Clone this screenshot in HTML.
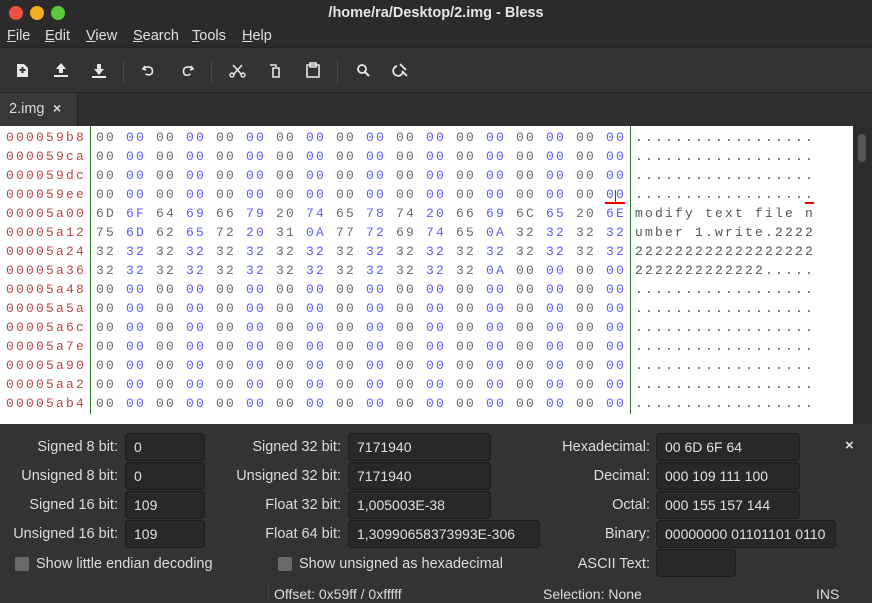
<!DOCTYPE html>
<html><head><style>
*{margin:0;padding:0;box-sizing:border-box}
body{width:872px;height:603px;background:#333333;font-family:"Liberation Sans",sans-serif;color:#dcdcdc;position:relative;overflow:hidden;font-size:14px}
.a{position:absolute}
#title{left:0;top:0;width:872px;height:26px;background:#2b2b2b;text-align:center;font-weight:bold;font-size:14.5px;line-height:26px;color:#e6e6e6}
.dot{position:absolute;top:6px;width:14px;height:14px;border-radius:50%}
#menu{top:26px;left:0;width:872px;height:21px;background:#2b2b2b}
#menu span{position:absolute;top:2px;font-size:14.5px;color:#e0e0e0}
#tb{top:47px;left:0;width:872px;height:46px;background:#333;border-top:1px solid #252525;border-bottom:1px solid #252525}
.sep{position:absolute;top:12px;width:1px;height:24px;background:#4a4a4a}
#tabs{top:93px;left:0;width:872px;height:33px;background:#2f2f2f}
#tab{position:absolute;left:0;top:0;width:78px;height:33px;background:#383838;border-right:1px solid #222}
#hex{top:126px;left:0;width:853px;height:298px;background:#fff}
#sb{top:126px;left:853px;width:19px;height:298px;background:#2d2d2d}
.row{position:absolute;left:0;height:19px;font-family:"Liberation Mono",monospace;font-size:13px;letter-spacing:2.2px;white-space:pre;line-height:19px}
.row .o{position:absolute;left:6px;color:#b5474a}
.row b{font-weight:normal;position:absolute;}
.g{color:#6a6a6a}.bl{color:#5c5cff}
.row .t{position:absolute;left:635px;color:#555}
.lbl{position:absolute;text-align:right;font-size:14.5px;color:#dcdcdc}
.in{position:absolute;height:28px;background:#282828;border:1px solid #1c1c1c;border-radius:4px;font-size:14px;padding-left:8px;line-height:26px;color:#e0e0e0}
.cb{position:absolute;width:14px;height:14px;background:#6a6a6a;border-radius:2px;top:557px}
</style></head><body>
<div class="a" id="title">/home/ra/Desktop/2.img - Bless
<div class="dot" style="left:9px;background:#ec5145"></div>
<div class="dot" style="left:30px;background:#f1ad23"></div>
<div class="dot" style="left:51px;background:#5cc93d"></div>
</div>
<div class="a" id="menu">
<span style="left:7px"><u>F</u>ile</span><span style="left:45px"><u>E</u>dit</span><span style="left:86px"><u>V</u>iew</span><span style="left:133px"><u>S</u>earch</span><span style="left:192px"><u>T</u>ools</span><span style="left:242px"><u>H</u>elp</span>
</div>
<div class="a" id="tb">
<svg width="872" height="44" style="position:absolute;left:0;top:0" fill="none" stroke="#e8e8e8" stroke-width="2">
<path d="M17 16h7l4 4v9H17z" fill="#e8e8e8" stroke="none"/><path d="M22.5 19v6M19.5 22h6" stroke="#333"/>
<path d="M61 15l-5 6h3v4h4v-4h3z" fill="#e8e8e8" stroke="none"/><path d="M54 28h14"/>
<path d="M99 27l-5-6h3v-5h4v5h3z" fill="#e8e8e8" stroke="none"/><path d="M92 29h14"/>
<path d="M145 18l-2 3 3 1M143.5 21c2-3 9-3 9 2s-5 4-7 3" stroke-width="1.6"/>
<path d="M191 18l2 3-3 1M192.5 21c-2-3-9-3-9 2s4 5 7 3" stroke-width="1.6"/>
<path d="M233 17l9 10M242 17l-9 10" stroke-width="1.6"/><circle cx="232" cy="27" r="2" stroke-width="1.4"/><circle cx="243" cy="27" r="2" stroke-width="1.4"/>
<path d="M270 17h6v2M273 20h6v9h-6z" stroke-width="1.6"/>
<path d="M307 17h12v12h-12z M310 15h6v4h-6z" stroke-width="1.6"/>
<circle cx="362" cy="21" r="4" stroke-width="1.8"/><path d="M365 24l4 4"/>
<path d="M397 18a5 5 0 1 0 6 6M402 23l5 5M400 16l6 6" stroke-width="1.8"/>
</svg>
<div class="sep" style="left:123px"></div><div class="sep" style="left:211px"></div><div class="sep" style="left:337px"></div>
</div>
<div class="a" id="tabs"><div id="tab"><span style="position:absolute;left:9px;top:8px;font-size:14.5px">2.img</span><span style="position:absolute;left:53px;top:7px;font-size:14px;font-weight:bold">×</span></div></div>
<div class="a" id="hex">
<div class="a" style="left:90px;top:0;width:1px;height:288px;background:#2a7a2a"></div>
<div class="a" style="left:630px;top:0;width:1px;height:288px;background:#2a7a2a"></div>
<div class="a" style="left:605px;top:76px;width:20px;height:2px;background:#e00"></div>
<div class="a" style="left:615px;top:64px;width:1px;height:13px;background:#e00"></div>
<div class="a" style="left:805px;top:76px;width:9px;height:2px;background:#e00"></div>
</div>
<div class="a" id="sb"><div class="a" style="left:5px;top:8px;width:8px;height:28px;background:#555;border-radius:4px"></div></div>

<div class="row" style="top:128px"><span class="o">000059b8</span><b class="g" style="left:96px">00</b><b class="bl" style="left:126px">00</b><b class="g" style="left:156px">00</b><b class="bl" style="left:186px">00</b><b class="g" style="left:216px">00</b><b class="bl" style="left:246px">00</b><b class="g" style="left:276px">00</b><b class="bl" style="left:306px">00</b><b class="g" style="left:336px">00</b><b class="bl" style="left:366px">00</b><b class="g" style="left:396px">00</b><b class="bl" style="left:426px">00</b><b class="g" style="left:456px">00</b><b class="bl" style="left:486px">00</b><b class="g" style="left:516px">00</b><b class="bl" style="left:546px">00</b><b class="g" style="left:576px">00</b><b class="bl" style="left:606px">00</b><span class="t">..................</span></div>
<div class="row" style="top:147px"><span class="o">000059ca</span><b class="g" style="left:96px">00</b><b class="bl" style="left:126px">00</b><b class="g" style="left:156px">00</b><b class="bl" style="left:186px">00</b><b class="g" style="left:216px">00</b><b class="bl" style="left:246px">00</b><b class="g" style="left:276px">00</b><b class="bl" style="left:306px">00</b><b class="g" style="left:336px">00</b><b class="bl" style="left:366px">00</b><b class="g" style="left:396px">00</b><b class="bl" style="left:426px">00</b><b class="g" style="left:456px">00</b><b class="bl" style="left:486px">00</b><b class="g" style="left:516px">00</b><b class="bl" style="left:546px">00</b><b class="g" style="left:576px">00</b><b class="bl" style="left:606px">00</b><span class="t">..................</span></div>
<div class="row" style="top:166px"><span class="o">000059dc</span><b class="g" style="left:96px">00</b><b class="bl" style="left:126px">00</b><b class="g" style="left:156px">00</b><b class="bl" style="left:186px">00</b><b class="g" style="left:216px">00</b><b class="bl" style="left:246px">00</b><b class="g" style="left:276px">00</b><b class="bl" style="left:306px">00</b><b class="g" style="left:336px">00</b><b class="bl" style="left:366px">00</b><b class="g" style="left:396px">00</b><b class="bl" style="left:426px">00</b><b class="g" style="left:456px">00</b><b class="bl" style="left:486px">00</b><b class="g" style="left:516px">00</b><b class="bl" style="left:546px">00</b><b class="g" style="left:576px">00</b><b class="bl" style="left:606px">00</b><span class="t">..................</span></div>
<div class="row" style="top:185px"><span class="o">000059ee</span><b class="g" style="left:96px">00</b><b class="bl" style="left:126px">00</b><b class="g" style="left:156px">00</b><b class="bl" style="left:186px">00</b><b class="g" style="left:216px">00</b><b class="bl" style="left:246px">00</b><b class="g" style="left:276px">00</b><b class="bl" style="left:306px">00</b><b class="g" style="left:336px">00</b><b class="bl" style="left:366px">00</b><b class="g" style="left:396px">00</b><b class="bl" style="left:426px">00</b><b class="g" style="left:456px">00</b><b class="bl" style="left:486px">00</b><b class="g" style="left:516px">00</b><b class="bl" style="left:546px">00</b><b class="g" style="left:576px">00</b><b class="bl" style="left:606px">00</b><span class="t">..................</span></div>
<div class="row" style="top:204px"><span class="o">00005a00</span><b class="g" style="left:96px">6D</b><b class="bl" style="left:126px">6F</b><b class="g" style="left:156px">64</b><b class="bl" style="left:186px">69</b><b class="g" style="left:216px">66</b><b class="bl" style="left:246px">79</b><b class="g" style="left:276px">20</b><b class="bl" style="left:306px">74</b><b class="g" style="left:336px">65</b><b class="bl" style="left:366px">78</b><b class="g" style="left:396px">74</b><b class="bl" style="left:426px">20</b><b class="g" style="left:456px">66</b><b class="bl" style="left:486px">69</b><b class="g" style="left:516px">6C</b><b class="bl" style="left:546px">65</b><b class="g" style="left:576px">20</b><b class="bl" style="left:606px">6E</b><span class="t">modify text file n</span></div>
<div class="row" style="top:223px"><span class="o">00005a12</span><b class="g" style="left:96px">75</b><b class="bl" style="left:126px">6D</b><b class="g" style="left:156px">62</b><b class="bl" style="left:186px">65</b><b class="g" style="left:216px">72</b><b class="bl" style="left:246px">20</b><b class="g" style="left:276px">31</b><b class="bl" style="left:306px">0A</b><b class="g" style="left:336px">77</b><b class="bl" style="left:366px">72</b><b class="g" style="left:396px">69</b><b class="bl" style="left:426px">74</b><b class="g" style="left:456px">65</b><b class="bl" style="left:486px">0A</b><b class="g" style="left:516px">32</b><b class="bl" style="left:546px">32</b><b class="g" style="left:576px">32</b><b class="bl" style="left:606px">32</b><span class="t">umber 1.write.2222</span></div>
<div class="row" style="top:242px"><span class="o">00005a24</span><b class="g" style="left:96px">32</b><b class="bl" style="left:126px">32</b><b class="g" style="left:156px">32</b><b class="bl" style="left:186px">32</b><b class="g" style="left:216px">32</b><b class="bl" style="left:246px">32</b><b class="g" style="left:276px">32</b><b class="bl" style="left:306px">32</b><b class="g" style="left:336px">32</b><b class="bl" style="left:366px">32</b><b class="g" style="left:396px">32</b><b class="bl" style="left:426px">32</b><b class="g" style="left:456px">32</b><b class="bl" style="left:486px">32</b><b class="g" style="left:516px">32</b><b class="bl" style="left:546px">32</b><b class="g" style="left:576px">32</b><b class="bl" style="left:606px">32</b><span class="t">222222222222222222</span></div>
<div class="row" style="top:261px"><span class="o">00005a36</span><b class="g" style="left:96px">32</b><b class="bl" style="left:126px">32</b><b class="g" style="left:156px">32</b><b class="bl" style="left:186px">32</b><b class="g" style="left:216px">32</b><b class="bl" style="left:246px">32</b><b class="g" style="left:276px">32</b><b class="bl" style="left:306px">32</b><b class="g" style="left:336px">32</b><b class="bl" style="left:366px">32</b><b class="g" style="left:396px">32</b><b class="bl" style="left:426px">32</b><b class="g" style="left:456px">32</b><b class="bl" style="left:486px">0A</b><b class="g" style="left:516px">00</b><b class="bl" style="left:546px">00</b><b class="g" style="left:576px">00</b><b class="bl" style="left:606px">00</b><span class="t">2222222222222.....</span></div>
<div class="row" style="top:280px"><span class="o">00005a48</span><b class="g" style="left:96px">00</b><b class="bl" style="left:126px">00</b><b class="g" style="left:156px">00</b><b class="bl" style="left:186px">00</b><b class="g" style="left:216px">00</b><b class="bl" style="left:246px">00</b><b class="g" style="left:276px">00</b><b class="bl" style="left:306px">00</b><b class="g" style="left:336px">00</b><b class="bl" style="left:366px">00</b><b class="g" style="left:396px">00</b><b class="bl" style="left:426px">00</b><b class="g" style="left:456px">00</b><b class="bl" style="left:486px">00</b><b class="g" style="left:516px">00</b><b class="bl" style="left:546px">00</b><b class="g" style="left:576px">00</b><b class="bl" style="left:606px">00</b><span class="t">..................</span></div>
<div class="row" style="top:299px"><span class="o">00005a5a</span><b class="g" style="left:96px">00</b><b class="bl" style="left:126px">00</b><b class="g" style="left:156px">00</b><b class="bl" style="left:186px">00</b><b class="g" style="left:216px">00</b><b class="bl" style="left:246px">00</b><b class="g" style="left:276px">00</b><b class="bl" style="left:306px">00</b><b class="g" style="left:336px">00</b><b class="bl" style="left:366px">00</b><b class="g" style="left:396px">00</b><b class="bl" style="left:426px">00</b><b class="g" style="left:456px">00</b><b class="bl" style="left:486px">00</b><b class="g" style="left:516px">00</b><b class="bl" style="left:546px">00</b><b class="g" style="left:576px">00</b><b class="bl" style="left:606px">00</b><span class="t">..................</span></div>
<div class="row" style="top:318px"><span class="o">00005a6c</span><b class="g" style="left:96px">00</b><b class="bl" style="left:126px">00</b><b class="g" style="left:156px">00</b><b class="bl" style="left:186px">00</b><b class="g" style="left:216px">00</b><b class="bl" style="left:246px">00</b><b class="g" style="left:276px">00</b><b class="bl" style="left:306px">00</b><b class="g" style="left:336px">00</b><b class="bl" style="left:366px">00</b><b class="g" style="left:396px">00</b><b class="bl" style="left:426px">00</b><b class="g" style="left:456px">00</b><b class="bl" style="left:486px">00</b><b class="g" style="left:516px">00</b><b class="bl" style="left:546px">00</b><b class="g" style="left:576px">00</b><b class="bl" style="left:606px">00</b><span class="t">..................</span></div>
<div class="row" style="top:337px"><span class="o">00005a7e</span><b class="g" style="left:96px">00</b><b class="bl" style="left:126px">00</b><b class="g" style="left:156px">00</b><b class="bl" style="left:186px">00</b><b class="g" style="left:216px">00</b><b class="bl" style="left:246px">00</b><b class="g" style="left:276px">00</b><b class="bl" style="left:306px">00</b><b class="g" style="left:336px">00</b><b class="bl" style="left:366px">00</b><b class="g" style="left:396px">00</b><b class="bl" style="left:426px">00</b><b class="g" style="left:456px">00</b><b class="bl" style="left:486px">00</b><b class="g" style="left:516px">00</b><b class="bl" style="left:546px">00</b><b class="g" style="left:576px">00</b><b class="bl" style="left:606px">00</b><span class="t">..................</span></div>
<div class="row" style="top:356px"><span class="o">00005a90</span><b class="g" style="left:96px">00</b><b class="bl" style="left:126px">00</b><b class="g" style="left:156px">00</b><b class="bl" style="left:186px">00</b><b class="g" style="left:216px">00</b><b class="bl" style="left:246px">00</b><b class="g" style="left:276px">00</b><b class="bl" style="left:306px">00</b><b class="g" style="left:336px">00</b><b class="bl" style="left:366px">00</b><b class="g" style="left:396px">00</b><b class="bl" style="left:426px">00</b><b class="g" style="left:456px">00</b><b class="bl" style="left:486px">00</b><b class="g" style="left:516px">00</b><b class="bl" style="left:546px">00</b><b class="g" style="left:576px">00</b><b class="bl" style="left:606px">00</b><span class="t">..................</span></div>
<div class="row" style="top:375px"><span class="o">00005aa2</span><b class="g" style="left:96px">00</b><b class="bl" style="left:126px">00</b><b class="g" style="left:156px">00</b><b class="bl" style="left:186px">00</b><b class="g" style="left:216px">00</b><b class="bl" style="left:246px">00</b><b class="g" style="left:276px">00</b><b class="bl" style="left:306px">00</b><b class="g" style="left:336px">00</b><b class="bl" style="left:366px">00</b><b class="g" style="left:396px">00</b><b class="bl" style="left:426px">00</b><b class="g" style="left:456px">00</b><b class="bl" style="left:486px">00</b><b class="g" style="left:516px">00</b><b class="bl" style="left:546px">00</b><b class="g" style="left:576px">00</b><b class="bl" style="left:606px">00</b><span class="t">..................</span></div>
<div class="row" style="top:394px"><span class="o">00005ab4</span><b class="g" style="left:96px">00</b><b class="bl" style="left:126px">00</b><b class="g" style="left:156px">00</b><b class="bl" style="left:186px">00</b><b class="g" style="left:216px">00</b><b class="bl" style="left:246px">00</b><b class="g" style="left:276px">00</b><b class="bl" style="left:306px">00</b><b class="g" style="left:336px">00</b><b class="bl" style="left:366px">00</b><b class="g" style="left:396px">00</b><b class="bl" style="left:426px">00</b><b class="g" style="left:456px">00</b><b class="bl" style="left:486px">00</b><b class="g" style="left:516px">00</b><b class="bl" style="left:546px">00</b><b class="g" style="left:576px">00</b><b class="bl" style="left:606px">00</b><span class="t">..................</span></div>

<div class="lbl" style="right:754px;top:439px">Signed 8 bit:</div><div class="in" style="left:125px;top:433px;width:80px">0</div>
<div class="lbl" style="right:754px;top:468px">Unsigned 8 bit:</div><div class="in" style="left:125px;top:462px;width:80px">0</div>
<div class="lbl" style="right:754px;top:497px">Signed 16 bit:</div><div class="in" style="left:125px;top:491px;width:80px">109</div>
<div class="lbl" style="right:754px;top:526px">Unsigned 16 bit:</div><div class="in" style="left:125px;top:520px;width:80px">109</div>

<div class="lbl" style="right:531px;top:439px">Signed 32 bit:</div><div class="in" style="left:348px;top:433px;width:143px">7171940</div>
<div class="lbl" style="right:531px;top:468px">Unsigned 32 bit:</div><div class="in" style="left:348px;top:462px;width:143px">7171940</div>
<div class="lbl" style="right:531px;top:497px">Float 32 bit:</div><div class="in" style="left:348px;top:491px;width:143px">1,005003E-38</div>
<div class="lbl" style="right:531px;top:526px">Float 64 bit:</div><div class="in" style="left:348px;top:520px;width:192px">1,30990658373993E-306</div>

<div class="lbl" style="right:222px;top:439px">Hexadecimal:</div><div class="in" style="left:656px;top:433px;width:144px">00 6D 6F 64</div>
<div class="lbl" style="right:222px;top:468px">Decimal:</div><div class="in" style="left:656px;top:462px;width:144px">000 109 111 100</div>
<div class="lbl" style="right:222px;top:497px">Octal:</div><div class="in" style="left:656px;top:491px;width:144px">000 155 157 144</div>
<div class="lbl" style="right:222px;top:526px">Binary:</div><div class="in" style="left:656px;top:520px;width:180px;white-space:nowrap;overflow:hidden">00000000 01101101 0110</div>
<div class="lbl" style="right:222px;top:556px">ASCII Text:</div><div class="in" style="left:656px;top:549px;width:80px"></div>
<div class="a" style="left:845px;top:437px;font-weight:bold;font-size:15px">×</div>

<div class="cb" style="left:15px"></div><div class="a" style="left:36px;top:556px;font-size:14.5px">Show little endian decoding</div>
<div class="cb" style="left:278px"></div><div class="a" style="left:299px;top:556px;font-size:14.5px">Show unsigned as hexadecimal</div>
<div class="a" style="left:268px;top:586px;width:1px;height:16px;border-left:1px dotted #555"></div>
<div class="a" style="left:274px;top:586px;font-size:14px">Offset: 0x59ff / 0xfffff</div>
<div class="a" style="left:543px;top:586px;font-size:14px">Selection: None</div>
<div class="a" style="left:816px;top:586px;font-size:14px">INS</div>
</body></html>
